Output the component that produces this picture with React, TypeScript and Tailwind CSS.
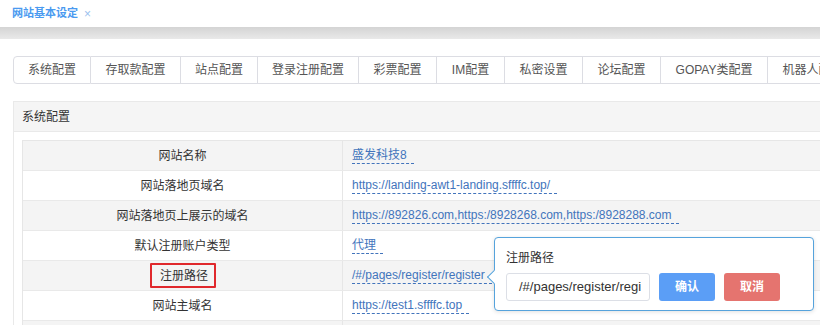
const tabs = [
  { name: "系统配置", w: 78 },
  { name: "存取款配置", w: 90 },
  { name: "站点配置", w: 77 },
  { name: "登录注册配置", w: 101 },
  { name: "彩票配置", w: 78 },
  { name: "IM配置", w: 68 },
  { name: "私密设置", w: 78 },
  { name: "论坛配置", w: 78 },
  { name: "GOPAY类配置", w: 107 },
  { name: "机器人配置", w: 90 },
];

const rows = [
  { label: "网站名称", value: "盛发科技8" },
  { label: "网站落地页域名", value: "https://landing-awt1-landing.sffffc.top/" },
  { label: "网站落地页上展示的域名", value: "https://892826.com,https:/8928268.com,https:/8928288.com" },
  { label: "默认注册账户类型", value: "代理" },
  { label: "注册路径", value: "/#/pages/register/register", marked: true },
  { label: "网站主域名", value: "https://test1.sffffc.top" },
  { label: "", value: "" },
];

export default function App() {
  return (
    <div
      className="relative h-[325px] w-[820px] overflow-hidden bg-white text-[#333]"
      style={{ fontFamily: '"Liberation Sans", "Noto Sans CJK SC", sans-serif' }}
    >
      {/* top tab strip */}
      <div className="flex h-[27px] items-center pl-[12px]">
        <span className="text-[11px] font-bold text-[#4a9af0]">网站基本设定</span>
        <span className="ml-[6px] text-[12px] text-[#9cc1ee]">×</span>
      </div>
      <div className="h-[12px] bg-gradient-to-b from-[#d4d4d4] to-[#e9e9e9]" />

      <div className="w-[900px] px-[13px] pt-[17px]">
        {/* config tabs */}
        <div className="flex h-[28px]">
          {tabs.map((t, i) => (
            <div
              key={t.name}
              className={
                "flex shrink-0 items-center justify-center border-y border-r border-[#dcdde3] text-[12px] text-[#555] " +
                (i === 0 ? "rounded-l-[4px] border-l" : "")
              }
              style={{ width: t.w }}
            >
              {t.name}
            </div>
          ))}
        </div>

        {/* panel */}
        <div className="mt-[17px] border-l border-t border-[#e9e9e9]">
          <div className="flex h-[30px] items-center border-b border-[#e9e9e9] bg-[#f5f5f5] pl-[8px] text-[12px] text-[#333]">
            系统配置
          </div>
          <div className="pl-[8px] pt-[8px]">
            <div className="border-l border-t border-[#e6e6e6]">
              {rows.map((r, i) => (
                <div
                  key={i}
                  className={
                    "flex h-[30px] border-b border-[#e9e9e9] " +
                    (i % 2 === 0 ? "bg-[#f4f4f4]" : "bg-white")
                  }
                >
                  <div className="flex w-[320px] shrink-0 items-center justify-center border-r border-[#e6e6e6] text-[12px] text-[#333]">
                    {r.marked ? (
                      <span className="flex h-[25px] w-[66px] items-center justify-center rounded-[1px] border-2 border-[#e0282c] pl-[3px]">
                        {r.label}
                      </span>
                    ) : (
                      r.label
                    )}
                  </div>
                  <div className="flex items-center pl-[9px]">
                    {r.value && (
                      <span className="border-b border-dashed border-[#4274bc] pr-[7px] leading-[15px] text-[12px] text-[#4274bc]">
                        {r.value}
                      </span>
                    )}
                  </div>
                </div>
              ))}
            </div>
          </div>
        </div>
      </div>

      {/* inline editor popover */}
      <div className="absolute left-[494px] top-[237px] h-[74px] w-[320px] rounded-[4px] border border-[#56a3dc] bg-white shadow-[0_1px_4px_rgba(0,0,0,0.12)]">
        <div className="absolute left-[-6px] top-[34px] h-[10px] w-[10px] rotate-45 border-b border-l border-[#56a3dc] bg-white" />
        <div className="pl-[11px] pt-[12px] text-[12px] leading-[16px] text-[#333]">注册路径</div>
        <div className="mt-[7px] flex items-center pl-[11px]">
          <div className="flex h-[28px] w-[144px] items-center overflow-hidden rounded-[3px] border border-[#dcdfe6] pl-[12px]">
            <span className="whitespace-nowrap text-[13px] text-[#333]">/#/pages/register/regi</span>
          </div>
          <button className="ml-[9px] h-[28px] w-[56px] rounded-[3px] bg-[#5b9ef6] text-[12px] font-bold text-white">
            确认
          </button>
          <button className="ml-[9px] h-[28px] w-[56px] rounded-[3px] bg-[#e5746f] text-[12px] font-bold text-white">
            取消
          </button>
        </div>
      </div>
    </div>
  );
}
